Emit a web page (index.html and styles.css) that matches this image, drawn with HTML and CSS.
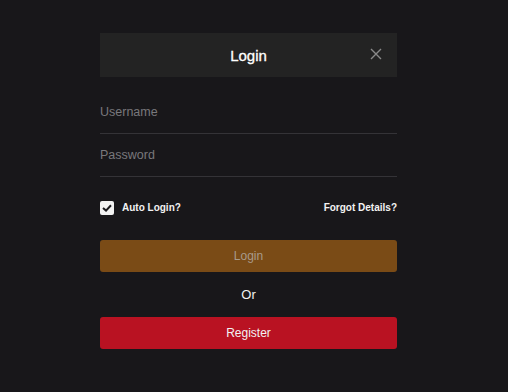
FILE: index.html
```html
<!DOCTYPE html>
<html lang="en">
<head>
    <meta charset="UTF-8">
    <meta name="viewport" content="width=device-width, initial-scale=1.0">
    <title>Login</title>
    <link rel="stylesheet" href="styles.css">
</head>
<body>
    <div class="modal">
        <div class="head">
            <span class="title">Login</span>
            <button class="close" aria-label="Close">
                <svg width="12" height="12" viewBox="0 0 12 12">
                    <path d="M1 1L11 11M11 1L1 11" stroke="#8a8a8a" stroke-width="1.4" fill="none"/>
                </svg>
            </button>
        </div>
        <form class="form">
            <input type="text" class="field" placeholder="Username">
            <input type="password" class="field" placeholder="Password">
            <div class="opts">
                <label class="auto">
                    <span class="check">
                        <svg width="10" height="8" viewBox="0 0 10 8">
                            <path d="M1 4L4 6.6L9 1.2" stroke="#1a191c" stroke-width="2" fill="none"/>
                        </svg>
                    </span>
                    Auto Login?
                </label>
                <a class="forgot" href="#">Forgot Details?</a>
            </div>
            <button type="button" class="btn btn-login">Login</button>
            <p class="or">Or</p>
            <button type="button" class="btn btn-register">Register</button>
        </form>
    </div>
</body>
</html>
```

FILE: styles.css
```css
*{
    box-sizing: border-box;
    font-family: Arial, "Liberation Sans", Helvetica, sans-serif;
}
body{
    margin: 0;
    background-color: #18171a;
}
.modal{
    width: 297px;
    margin: 33px 0 0 100px;
}
.head{
    height: 44px;
    background-color: #232323;
    display: flex;
    align-items: center;
    justify-content: center;
    position: relative;
}
.title{
    color: #ffffff;
    font-size: 15px;
    -webkit-text-stroke: 0.3px #ffffff;
}
.close{
    position: absolute;
    right: 15px;
    top: 15px;
    background: none;
    border: none;
    padding: 0;
    width: 12px;
    height: 12px;
    display: flex;
    cursor: pointer;
}
.form{
    display: flex;
    flex-direction: column;
    padding-top: 14px;
}
.field{
    height: 43px;
    background: none;
    border: none;
    border-bottom: 1px solid #343337;
    color: #ccc;
    font-size: 12.5px;
    padding: 0;
    outline: none;
}
.field::placeholder{
    color: #79787c;
}
.opts{
    display: flex;
    justify-content: space-between;
    align-items: center;
    margin-top: 23px;
    height: 15px;
}
.auto{
    display: flex;
    align-items: center;
    gap: 8px;
    color: #f2f2f2;
    font-size: 10px;
    font-weight: bold;
}
.check{
    width: 14px;
    height: 14px;
    border-radius: 2px;
    background-color: #f2f2f2;
    display: flex;
    align-items: center;
    justify-content: center;
}
.forgot{
    color: #f2f2f2;
    font-size: 10px;
    font-weight: bold;
    text-decoration: none;
}
.btn{
    width: 100%;
    height: 32px;
    border: none;
    border-radius: 3px;
    font-size: 12px;
    cursor: pointer;
}
.btn-login{
    margin-top: 25px;
    background-color: #7a4b16;
    color: #a89a8a;
}
.or{
    margin: 0;
    height: 45px;
    line-height: 45px;
    text-align: center;
    color: #f2f2f2;
    font-size: 13px;
}
.btn-register{
    background-color: #b91222;
    color: #f2f2f2;
}
```
